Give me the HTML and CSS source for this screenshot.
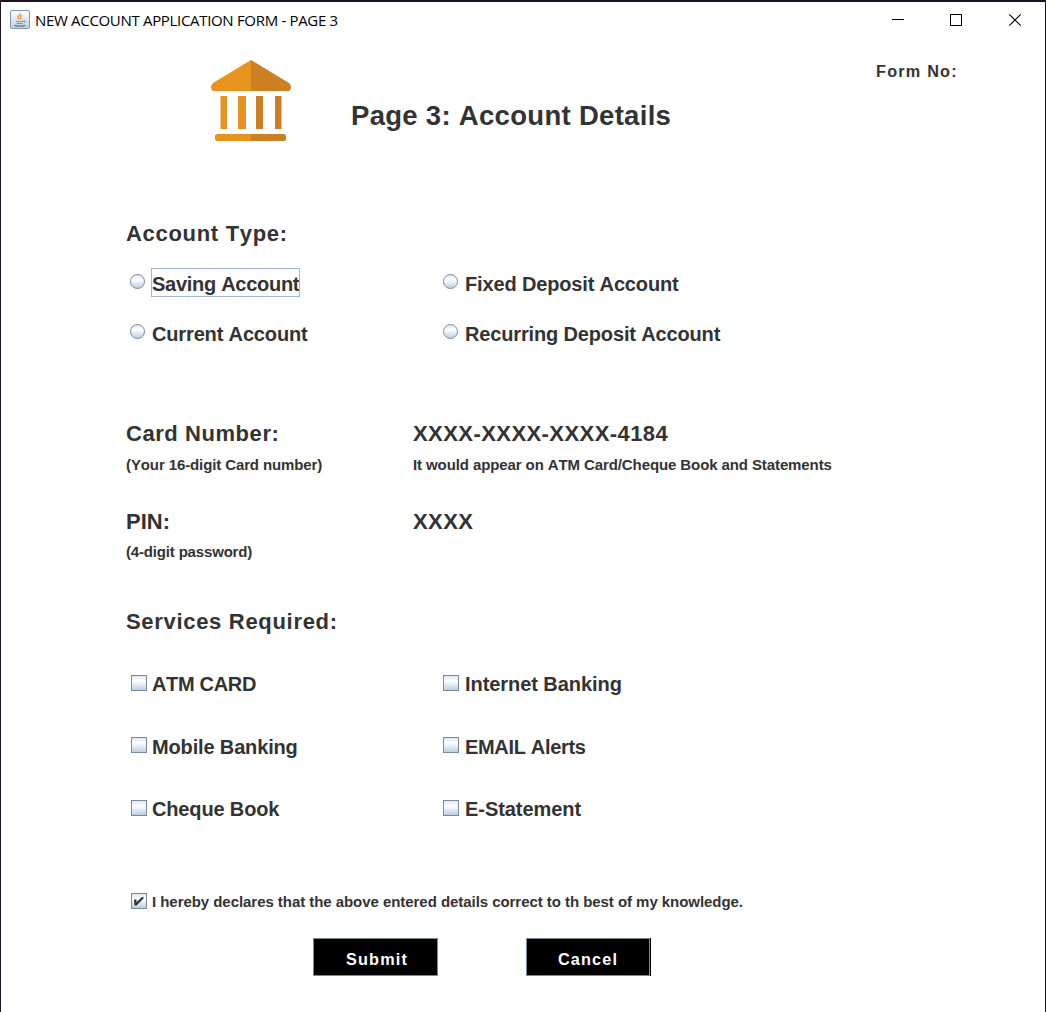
FILE: index.html
```html
<!DOCTYPE html>
<html lang="en">
<head>
<meta charset="utf-8">
<title>New Account Application Form - Page 3</title>
<link rel="stylesheet" href="styles.css">
</head>
<body>
<div class="window">
  <header class="titlebar">
    <svg class="java-icon" width="20" height="20" viewBox="0 0 20 20">
      <defs><linearGradient id="ji" x1="0" y1="0" x2="0" y2="1"><stop offset="0" stop-color="#fff"/><stop offset="1" stop-color="#bfd0de"/></linearGradient></defs>
      <rect x=".5" y=".5" width="19" height="18" rx="1.5" fill="url(#ji)" stroke="#8298aa"/>
      <path d="M10.500 3.200c.6 1.500-3.200 2.500-2.700 4.300.2 1 1.400 1.200 1.300 2.200M12.300 5.500c-1.900.6-2.500 1.300-1.800 2.200.5.700.4 1.200-.2 1.800" fill="none" stroke="#ea9550" stroke-width="1.300"/>
      <path d="M5.800 11.200c2 .6 5.500.6 7.700 0M6.500 13.200c1.700.6 4.500.6 6 0M13.500 10.800c2.200-.5 2 1.500.2 2" fill="none" stroke="#6f8c9f" stroke-width="1"/>
      <path d="M4.300 15.300c2.500 1.100 8.500 1.100 11 0" fill="none" stroke="#5f7f94" stroke-width="1.300"/>
    </svg>
    <span class="titlebar-text">NEW ACCOUNT APPLICATION FORM - PAGE 3</span>
    <svg class="controls" width="130" height="14" viewBox="0 0 130 14" fill="none" stroke="#000">
      <path d="M0 6.500h12"/>
      <rect x="58.500" y="1.500" width="11" height="11"/>
      <path d="M117.300 1.300l11.400 11.400M128.700 1.300l-11.400 11.400" stroke-width="1.100"/>
    </svg>
  </header>

  <main class="form">
    <div class="banner">
      <svg class="logo" width="82" height="82" viewBox="0 0 82 82">
        <path fill="#e7931f" d="M40 0L2 23Q0 25 0 27Q0 31 3 31H40z"/>
        <path fill="#cd8023" d="M40 0L78 23Q80 25 80 27Q80 31 77 31H40z"/>
        <path fill="#e7931f" d="M9.500 36h6.500v33h-6.500zM27 36h8v33h-8zM7 74h33v7H6Q4 81 4 79V76Q4 74 7 74z"/>
        <path fill="#cd8023" d="M45 36h7v33h-7zM64 36h6.500v33h-6.500zM40 74h33Q75 74 75 76v3Q75 81 73 81H40z"/>
      </svg>
      <h1 class="title">Page 3: Account Details</h1>
      <div class="form-no">Form No:</div>
    </div>

    <section class="account">
      <h2 class="heading track-wide">Account Type:</h2>
      <div class="options account-options">
        <label class="option"><i class="radio"></i><span class="focused">Saving Account</span></label>
        <label class="option"><i class="radio"></i><span>Fixed Deposit Account</span></label>
        <label class="option"><i class="radio"></i><span>Current Account</span></label>
        <label class="option"><i class="radio"></i><span>Recurring Deposit Account</span></label>
      </div>
    </section>

    <section class="details">
      <div>
        <h2 class="heading track-mid">Card Number:</h2>
        <p class="note">(Your 16-digit Card number)</p>
      </div>
      <div>
        <div class="heading track-card">XXXX-XXXX-XXXX-4184</div>
        <p class="note track-note">It would appear on ATM Card/Cheque Book and Statements</p>
      </div>
      <div>
        <h2 class="heading">PIN:</h2>
        <p class="note note-pin">(4-digit password)</p>
      </div>
      <div>
        <div class="heading track-card">XXXX</div>
      </div>
    </section>

    <section class="services">
      <h2 class="heading track-wide">Services Required:</h2>
      <div class="options service-options">
        <label class="option tight"><i class="check"></i><span>ATM CARD</span></label>
        <label class="option loose"><i class="check"></i><span>Internet Banking</span></label>
        <label class="option raised"><i class="check"></i><span>Mobile Banking</span></label>
        <label class="option tight raised"><i class="check"></i><span>EMAIL Alerts</span></label>
        <label class="option"><i class="check"></i><span>Cheque Book</span></label>
        <label class="option loose"><i class="check"></i><span>E-Statement</span></label>
      </div>
    </section>

    <label class="declaration">
      <i class="check">
        <svg width="16" height="16" viewBox="0 0 16 16"><path d="M3 6.500h2.500v2.700L11 4h1.500v1.500L5.500 12.500H3.500z" fill="#333"/></svg>
      </i>
      <span>I hereby declares that the above entered details correct to th best of my knowledge.</span>
    </label>

    <div class="actions">
      <button class="button" type="button">Submit</button>
      <button class="button button-cancel" type="button">Cancel</button>
    </div>
  </main>
</div>
</body>
</html>
```
FILE: styles.css
```css
* { box-sizing: border-box; }
html, body { height: 100%; }
body {
  margin: 0;
  background: #fff;
  color: #333;
  font-family: "Liberation Sans", Arial, sans-serif;
  font-weight: bold;
  font-kerning: none;
  overflow: hidden;
}
h1, h2, p { margin: 0; }
svg { display: block; }

.window {
  height: 1012px;
  border: 1px solid #1a1426;
  border-top-width: 2px;
  border-bottom: 0;
}

.titlebar {
  height: 36px;
  display: flex;
  align-items: center;
  padding: 0 23px 0 9px;
}
.titlebar-text {
  margin-left: 5px;
  font: 15px/20px "Open Sans", sans-serif;
  letter-spacing: -0.32px;
  color: #000;
  white-space: nowrap;
}
.controls { margin-left: auto; }

.form { padding-left: 125px; }

.banner {
  height: 182px;
  display: flex;
  align-items: flex-start;
  padding: 22px 0 0 85px;
}
.title {
  margin: 40px 0 0 58px;
  font-size: 27.5px;
  line-height: 32px;
  letter-spacing: 0.3px;
  width: 525px;
}
.form-no {
  margin-top: 1px;
  font-size: 16.25px;
  line-height: 20px;
  letter-spacing: 1.2px;
  white-space: nowrap;
}

.heading {
  height: 26px;
  padding-top: 1px;
  font-size: 22px;
  line-height: 26px;
  font-weight: bold;
  white-space: nowrap;
}
.track-wide { letter-spacing: 0.69px; }
.track-mid { letter-spacing: 0.56px; }
.track-card { letter-spacing: 0.43px; }

.options {
  display: grid;
  grid-template-columns: 313px 1fr;
  margin-left: 4px;
}
.option {
  display: flex;
  height: 28px;
  font-size: 20px;
  line-height: 28px;
  letter-spacing: -0.15px;
  white-space: nowrap;
}
.option.tight { letter-spacing: -0.33px; }
.option.loose { letter-spacing: -0.06px; }

.account-options { margin-top: 24px; row-gap: 22px; }
.radio {
  width: 15px;
  height: 15px;
  margin: 4px 7px 0 0;
  border: 1px solid #7a8a99;
  border-radius: 50%;
  background: linear-gradient(#dde8f3, #fff 35%, #b8cfe5);
}
.focused {
  position: relative;
  letter-spacing: -0.28px;
}
.focused::before {
  content: "";
  box-sizing: border-box;
  position: absolute;
  left: -1px;
  top: -2px;
  width: 149px;
  height: 29px;
  border: 1px solid #a3b8cc;
}

.details {
  display: grid;
  grid-template-columns: 287px 1fr;
  row-gap: 34px;
  margin-top: 72px;
}
.note {
  margin-top: 10px;
  font-size: 15px;
  line-height: 18px;
  letter-spacing: -0.11px;
  white-space: nowrap;
}
.track-note { letter-spacing: -0.1px; }
.note-pin { margin-top: 9px; letter-spacing: -0.17px; }

.services { margin-top: 47px; }
.service-options {
  margin-top: 36px;
  grid-template-rows: 63px 62px 28px;
}
.check {
  flex: none;
  width: 16px;
  height: 16px;
  margin: 5px 5px 0 1px;
  border: 1px solid #7a8a99;
  background: linear-gradient(#dde8f3, #fff 35%, #b8cfe5);
}
.option:nth-child(even) .check { margin-left: 0; margin-right: 6px; }
.check svg { margin: -1px; }
.raised .check { margin-top: 4px; }

.declaration {
  display: flex;
  margin: 70px 0 0 4px;
  font-size: 15px;
  line-height: 18px;
  letter-spacing: -0.05px;
  white-space: nowrap;
}
.declaration .check { margin-top: 0; }

.actions {
  display: flex;
  gap: 88px;
  margin: 27px 0 0 187px;
}
.button {
  width: 125px;
  height: 38px;
  padding: 4px 0 0 3px;
  border: 1px solid #7a8a99;
  border-radius: 0;
  background: #000;
  color: #fff;
  font: bold 16.25px/20px "Liberation Sans", Arial, sans-serif;
  font-kerning: none;
  letter-spacing: 1.15px;
}
.button-cancel { width: 124px; padding-left: 0; box-shadow: 1px 0 #000; }
```
